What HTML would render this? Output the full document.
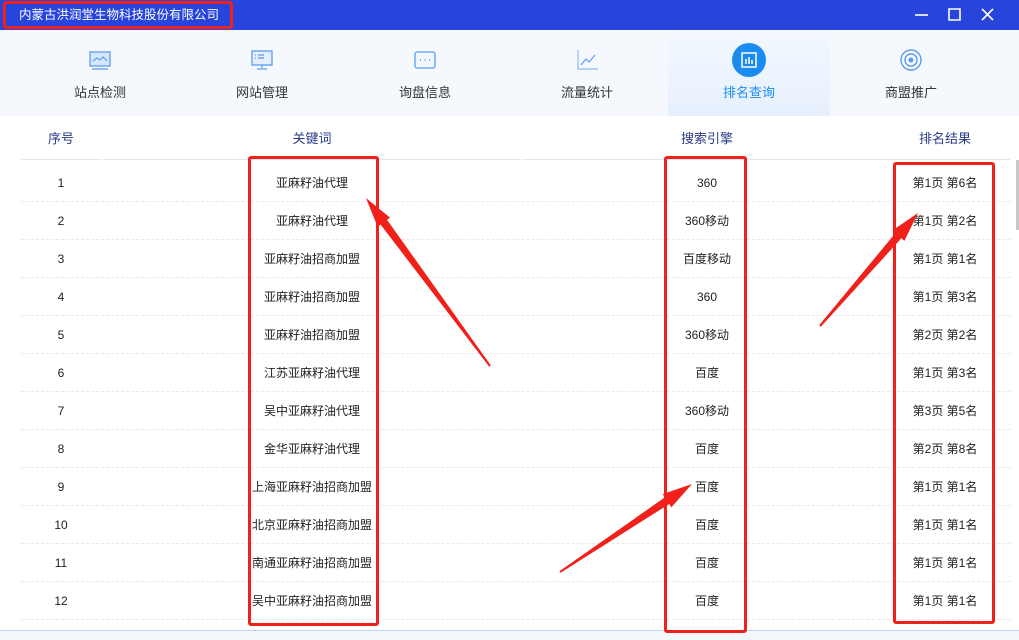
<!DOCTYPE html>
<html><head><meta charset="utf-8"><style>
*{margin:0;padding:0;box-sizing:border-box}
body{width:1019px;height:640px;overflow:hidden;background:#fff;position:relative;font-family:"Liberation Sans","Noto Sans CJK SC",sans-serif;color:#222}
.title{position:absolute;left:0;top:0;width:1019px;height:30px;background:#2744dc}
.title .t{position:absolute;left:19px;top:7px;color:#fff;font-size:12.5px;line-height:16px}
.rb{position:absolute;border:3px solid #f0201a;border-radius:3px}
.nav{position:absolute;left:0;top:30px;width:1019px;height:86px;background:#f5f9fe}
.tab{position:absolute;top:0;width:162px;height:86px;text-align:center}
.tab .l{position:absolute;top:55px;width:100%;font-size:13px;color:#333;line-height:16px}
.tab svg{position:absolute;left:66px;top:15px}
.act{background:linear-gradient(#f3f8fe,#e6f0fd)}
.act .l{color:#1a8cf0}
.h{position:absolute;top:131px;font-size:13px;line-height:16px;color:#2a3a8a;transform:translateX(-50%)}
.hl{position:absolute;top:159px;height:1px;background:#e3e8ee}
.row{position:absolute;left:21px;width:989px;height:1px;border-top:1px dashed #e8e8e8}
.c{position:absolute;font-size:12px;line-height:16px;height:16px;transform:translateX(-50%);white-space:nowrap;color:#222}
</style></head><body>
<div class="title"><div class="t">内蒙古洪润堂生物科技股份有限公司</div>
<svg style="position:absolute;left:910px;top:6px" width="90" height="18"><path d="M5 9h13" stroke="#fff" stroke-width="1.6"/><path d="M39 3h11v11h-11z" stroke="#fff" stroke-width="1.6" fill="none"/><path d="M72 3l11 11M83 3l-11 11" stroke="#fff" stroke-width="1.6"/></svg>
</div>
<div class="rb" style="left:3px;top:1px;width:230px;height:28px"></div>
<div class="nav">
<div class="tab" style="left:19px"><svg width="30" height="30"><rect x="5" y="7" width="20" height="14" fill="#d6e6fb" stroke="#5b9cf0" stroke-width="1.3"/><path d="M8 16l4-3 3 2 3-3 4 4" stroke="#5b9cf0" fill="none" stroke-width="1.2"/><path d="M7 24h16" stroke="#5b9cf0" stroke-width="1.3"/></svg><div class="l">站点检测</div></div>
<div class="tab" style="left:181px"><svg width="30" height="30"><rect x="5" y="6" width="20" height="14" fill="#e4eefc" stroke="#5b9cf0" stroke-width="1.3"/><path d="M8 10h1M11 10h6M8 13h1M11 13h6M15 20v3M10 24h10" stroke="#5b9cf0" stroke-width="1.2"/></svg><div class="l">网站管理</div></div>
<div class="tab" style="left:344px"><svg width="30" height="30"><rect x="5" y="7" width="20" height="16" rx="2" fill="#f2f7fe" stroke="#5b9cf0" stroke-width="1.3"/><path d="M10 15h1M14.5 15h1M19 15h1" stroke="#5b9cf0" stroke-width="1.4"/></svg><div class="l">询盘信息</div></div>
<div class="tab" style="left:506px"><svg width="30" height="30"><path d="M6 5v19h20" stroke="#8fb8f3" fill="none" stroke-width="1.2"/><path d="M9 20l5-6 3 3 6-7" stroke="#5b9cf0" fill="none" stroke-width="1.2"/></svg><div class="l">流量统计</div></div>
<div class="tab act" style="left:668px"><svg width="34" height="34" style="left:64px;top:13px"><circle cx="17" cy="17" r="17" fill="#1a8cf0"/><rect x="10" y="10" width="14" height="14" fill="none" stroke="#fff" stroke-width="1.5"/><path d="M14 21v-5M17 21v-7M20 21v-4" stroke="#fff" stroke-width="1.5"/></svg><div class="l">排名查询</div></div>
<div class="tab" style="left:830px"><svg width="30" height="30"><circle cx="15" cy="15" r="10" fill="none" stroke="#5b9cf0" stroke-width="1.4"/><circle cx="15" cy="15" r="6" fill="none" stroke="#5b9cf0" stroke-width="1.4"/><circle cx="15" cy="15" r="2.5" fill="#5b9cf0"/></svg><div class="l">商盟推广</div></div>
</div>
<div class="h" style="left:61px">序号</div>
<div class="h" style="left:312px">关键词</div>
<div class="h" style="left:707px">搜索引擎</div>
<div class="h" style="left:945px">排名结果</div>
<div class="hl" style="left:21px;width:80px"></div>
<div class="hl" style="left:103px;width:418px"></div>
<div class="hl" style="left:523px;width:487px"></div>
<div style="position:absolute;left:1016px;top:160px;width:3px;height:70px;background:#c8c8c8"></div>
<div style="position:absolute;left:0;top:630px;width:1019px;height:10px;background:#f5f9fe;border-top:1px solid #b8d4f8"></div>
<div id="rows"></div>
<script>
var d=[["亚麻籽油代理","360","第1页 第6名"],["亚麻籽油代理","360移动","第1页 第2名"],["亚麻籽油招商加盟","百度移动","第1页 第1名"],["亚麻籽油招商加盟","360","第1页 第3名"],["亚麻籽油招商加盟","360移动","第2页 第2名"],["江苏亚麻籽油代理","百度","第1页 第3名"],["吴中亚麻籽油代理","360移动","第3页 第5名"],["金华亚麻籽油代理","百度","第2页 第8名"],["上海亚麻籽油招商加盟","百度","第1页 第1名"],["北京亚麻籽油招商加盟","百度","第1页 第1名"],["南通亚麻籽油招商加盟","百度","第1页 第1名"],["吴中亚麻籽油招商加盟","百度","第1页 第1名"]];
var h="";for(var i=0;i<12;i++){var y=175+i*38;h+='<div class="c" style="left:61px;top:'+y+'px">'+(i+1)+'</div><div class="c" style="left:312px;top:'+y+'px">'+d[i][0]+'</div><div class="c" style="left:707px;top:'+y+'px">'+d[i][1]+'</div><div class="c" style="left:945px;top:'+y+'px">'+d[i][2]+'</div><div class="row" style="top:'+(201+i*38)+'px"></div>';}
document.getElementById("rows").innerHTML=h;
</script>
<div class="rb" style="left:248px;top:156px;width:131px;height:470px"></div>
<div class="rb" style="left:664px;top:156px;width:83px;height:477px"></div>
<div class="rb" style="left:893px;top:162px;width:102px;height:462px"></div>
<svg style="position:absolute;left:0;top:0" width="1019" height="640">
<g fill="#f0201a">
<polygon points="490.8,365.4 387,219.8 390,217.6 366,198 377.6,226.8 380.6,224.6 489.2,366.6"/>
<polygon points="820.8,326.7 901.4,238.3 904.4,240.9 918,213 892.4,230.5 895.4,233.1 819.2,325.3"/>
<polygon points="560.6,572.8 669.2,504 671.4,507.3 692,484 662.6,494.1 664.8,497.4 559.4,571.2"/>
</g></svg>
</body></html>
